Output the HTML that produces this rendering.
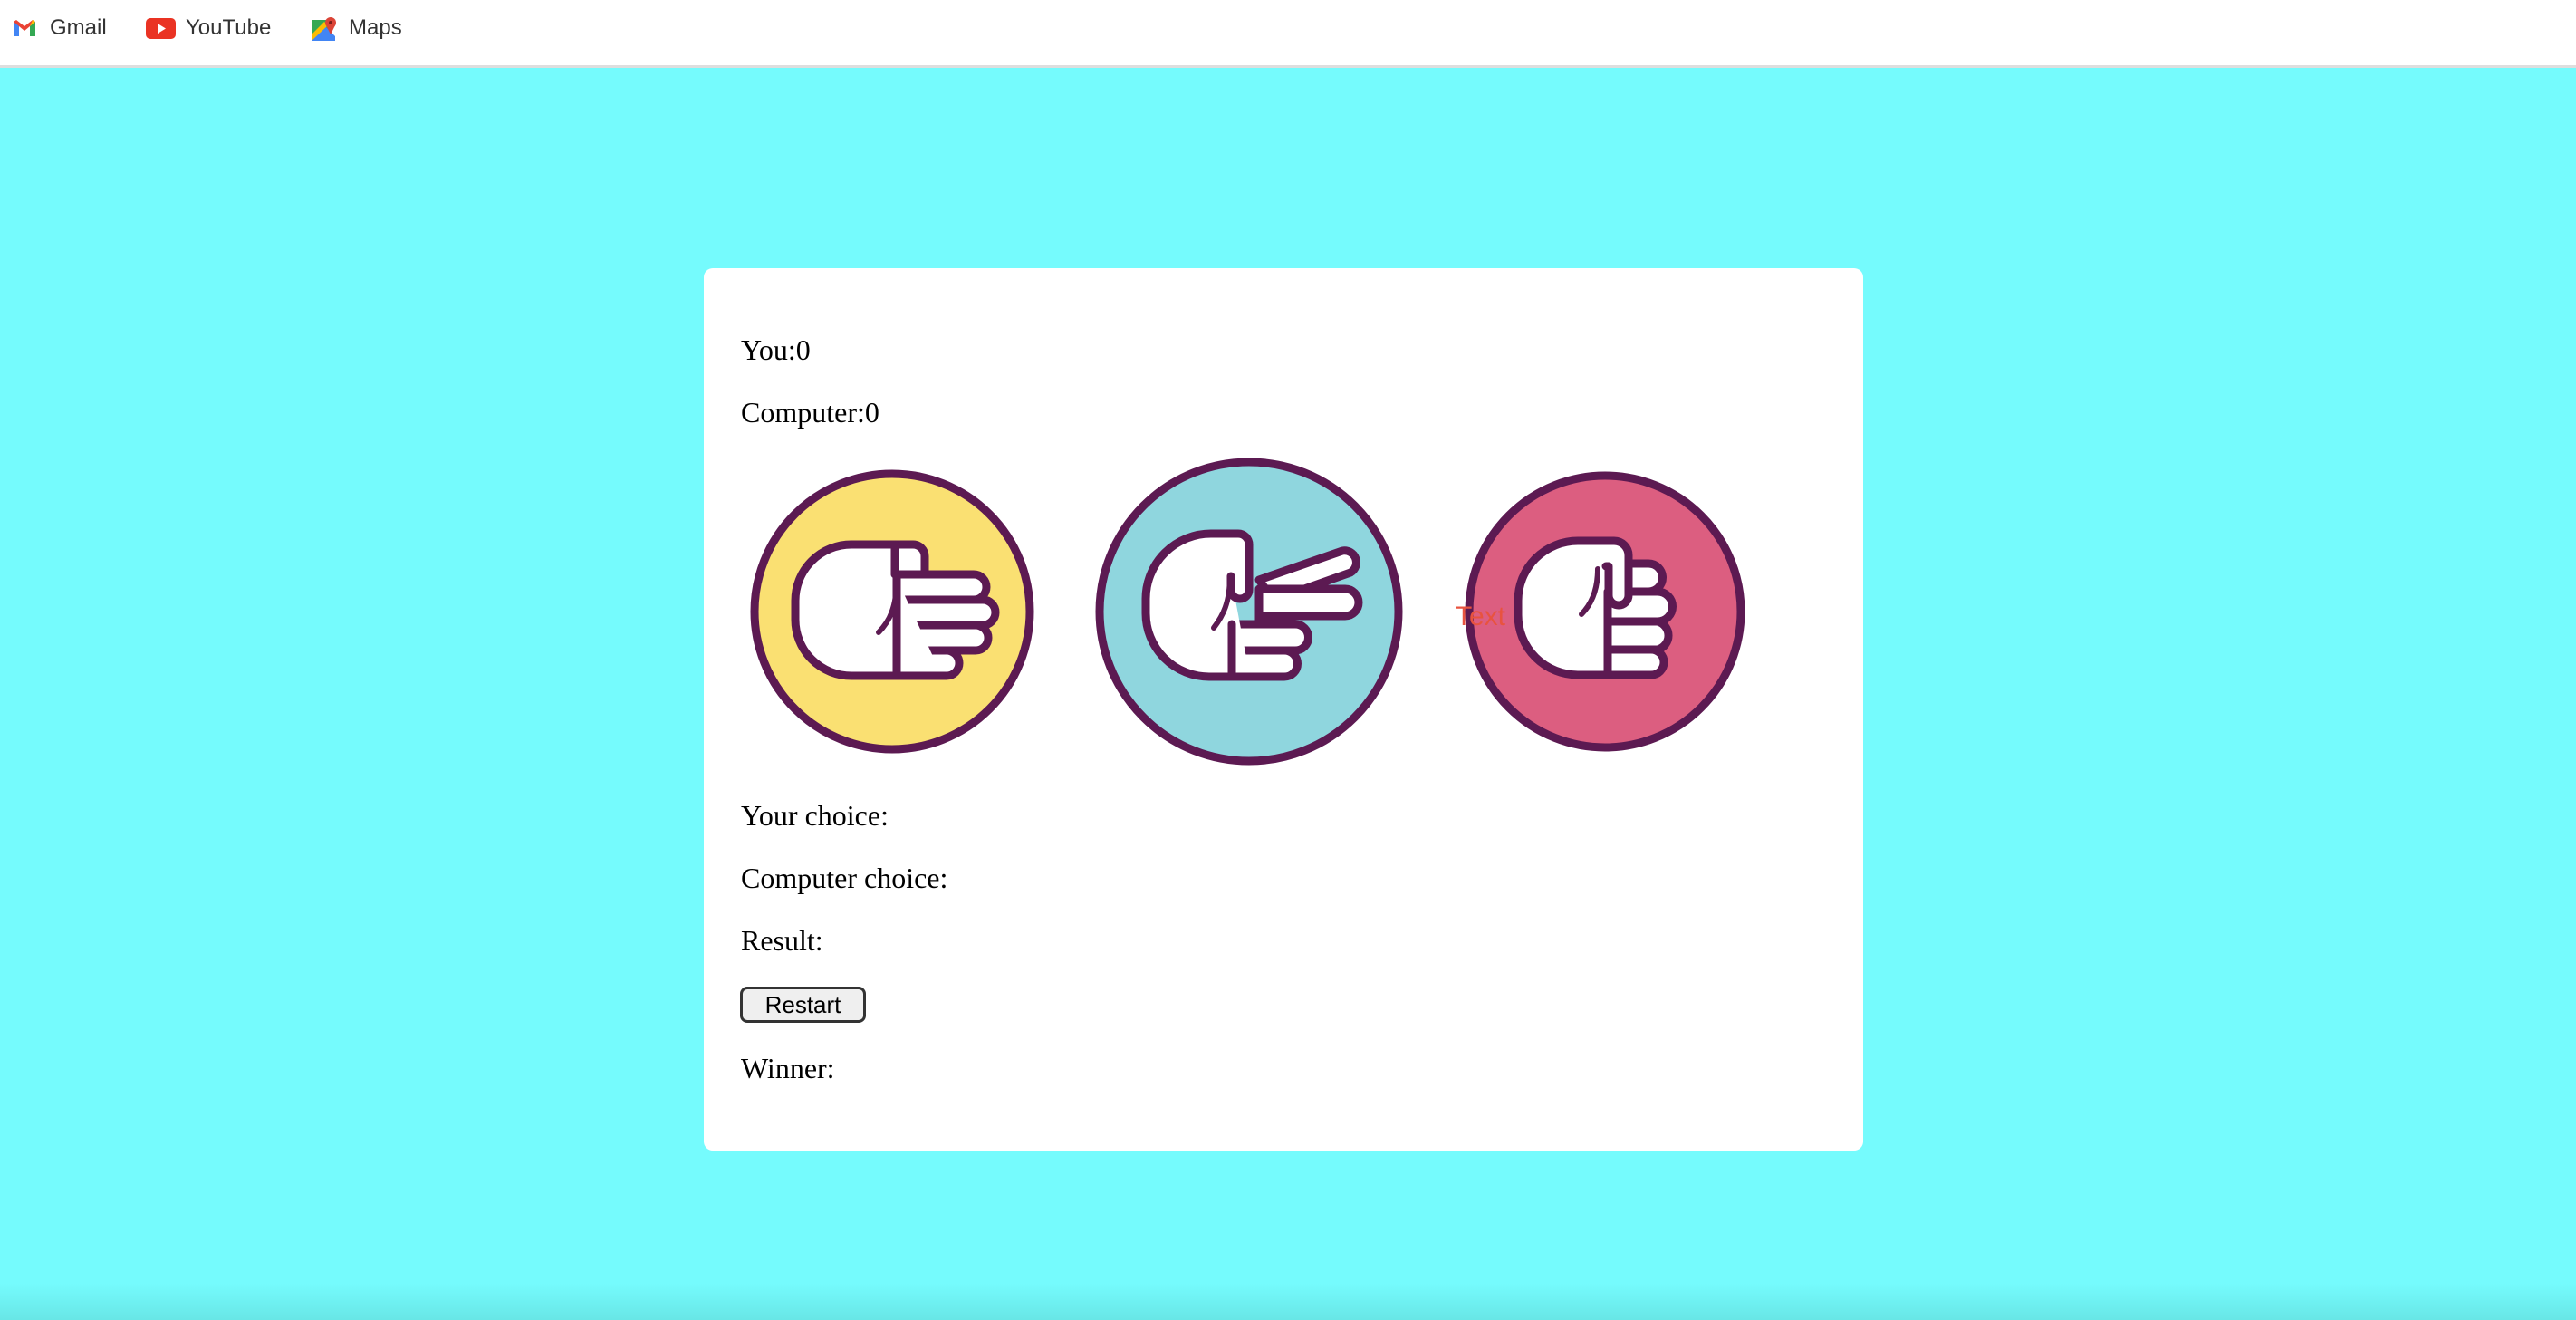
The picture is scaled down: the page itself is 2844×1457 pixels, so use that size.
<!DOCTYPE html>
<html><head><meta charset="utf-8"><style>
html,body{margin:0;padding:0;width:2844px;height:1457px;overflow:hidden;background:#75fbfd;position:relative;font-family:"Liberation Serif",serif}
.bar{position:absolute;left:0;top:0;width:2844px;height:72px;background:#fff;border-bottom:3px solid #dedede}
.bm{position:absolute;top:17px;font-family:"Liberation Sans",sans-serif;font-size:24px;color:#333}
.card{position:absolute;left:777px;top:296px;width:1280px;height:974px;background:#fff;border-radius:10px}
.t{position:absolute;left:818px;font-size:32px;color:#000;line-height:1}
.btn{position:absolute;left:817px;top:1089px;width:139px;height:40px;box-sizing:border-box;border:3px solid #333;border-radius:8px;background:#efefef;font-family:"Liberation Sans",sans-serif;font-size:26px;text-align:center;line-height:34px}
.shade{position:absolute;left:0;bottom:0;width:2844px;height:40px;background:linear-gradient(#75fbfd00,#68e6e6)}
</style></head><body>
<div class="bar"></div>
<svg style="position:absolute;left:13px;top:20px" width="28" height="22" viewBox="0 0 28 22"><path d="M2 4v16h6V9l6 5 6-5v11h6V4l-3-2-9 7-9-7z" fill="#ea4335"/><path d="M2 4v16h6V9z" fill="#4285f4"/><path d="M26 4v16h-6V9z" fill="#34a853"/><path d="M20 9l6-5-3-2z" fill="#fbbc04"/></svg>
<div class="bm" style="left:55px">Gmail</div>
<svg style="position:absolute;left:161px;top:20px" width="33" height="23"><rect width="33" height="23" rx="5" fill="#ea3323"/><path d="M13 6l9 5.5-9 5.5z" fill="#fff"/></svg>
<div class="bm" style="left:205px">YouTube</div>
<svg style="position:absolute;left:343px;top:16px" width="28" height="30"><path d="M1 6h20v23H1z" fill="#34a853"/><path d="M1 26l14-14 12 12v5H1z" fill="#4285f4"/><path d="M1 22l14-14 4 4L1 29z" fill="#fbbc04"/><circle cx="22" cy="9" r="6" fill="#db4437"/><path d="M17 12l5 10 5-10z" fill="#db4437"/><circle cx="22" cy="9" r="2" fill="#7a1f1a"/></svg>
<div class="bm" style="left:385px">Maps</div>

<div class="card"></div>
<div class="t" style="top:370px">You:0</div>
<div class="t" style="top:439px">Computer:0</div>

<svg style="position:absolute;left:0;top:0" width="2844" height="1457">
<g stroke="#5c1a52" stroke-width="9" stroke-linejoin="round" stroke-linecap="round">
<circle cx="985" cy="675" r="152" fill="#fae072"/>
<circle cx="1379" cy="675" r="165" fill="#8fd6de"/>
<circle cx="1772" cy="675" r="150" fill="#dc5e80"/>
<!-- paper -->
<g fill="#fff">
<path d="M940 601h68a13 13 0 0 1 13 13v22h-81z"/>
<path d="M985 634h90a14 14 0 0 1 0 28h-90z"/>
<path d="M985 662h100a14 14 0 0 1 0 28h-100z"/>
<path d="M985 690h92a14 14 0 0 1 0 28h-92z"/>
<path d="M985 718h60a13 13 0 0 1 0 28h-60z"/>
<path d="M1040 746h-100a62 62 0 0 1-62-62v-21a62 62 0 0 1 62-62h48v33" />
<path d="M990 634v112" fill="none"/>
</g>
<path d="M990 640c0 30-8 46-20 58" fill="none" stroke-width="6"/>
<!-- scissors -->
<g fill="#fff">
<path d="M1390 640l92-32a13 13 0 0 1 9 24l-85 30z"/>
<path d="M1390 650h95a15 15 0 0 1 0 30h-95z"/>
<path d="M1360 689h70a14 14 0 0 1 0 29h-70z"/>
<path d="M1360 718h58a14 14 0 0 1 0 29h-58z"/>
<path d="M1380 747h-45a70 70 0 0 1-70-70v-16a72 72 0 0 1 72-72h30a12 12 0 0 1 12 12v50a10 10 0 0 1-20 0v-15"/>
<path d="M1360 689v58M1390 655v34" fill="none"/>
</g>
<path d="M1358 635c0 30-8 45-18 58" fill="none" stroke-width="6"/>
<!-- rock -->
<g fill="#fff">
<path d="M1785 622h35a15 15 0 0 1 0 31h-35z"/>
<path d="M1775 653h55a16 16 0 0 1 0 33h-55z"/>
<path d="M1775 686h55a16 16 0 0 1 0 31h-55z"/>
<path d="M1775 717h48a14 14 0 0 1 0 28h-48z"/>
<path d="M1775 745h-33a66 66 0 0 1-66-66v-16a66 66 0 0 1 66-66h40a16 16 0 0 1 16 16v44a11 11 0 0 1-22 0v-32h-3"/>
<path d="M1775 653v92" fill="none"/>
</g>
<path d="M1764 628c0 25-8 40-18 50" fill="none" stroke-width="6"/>
</g>
</svg>
<div style="position:absolute;left:1607px;top:664px;font-family:'Liberation Sans',sans-serif;font-size:30px;color:#e8533f">Text</div>

<div class="t" style="top:884px">Your choice:</div>
<div class="t" style="top:953px">Computer choice:</div>
<div class="t" style="top:1022px">Result:</div>
<div class="btn">Restart</div>
<div class="t" style="top:1163px">Winner:</div>
<div class="shade"></div>
</body></html>
